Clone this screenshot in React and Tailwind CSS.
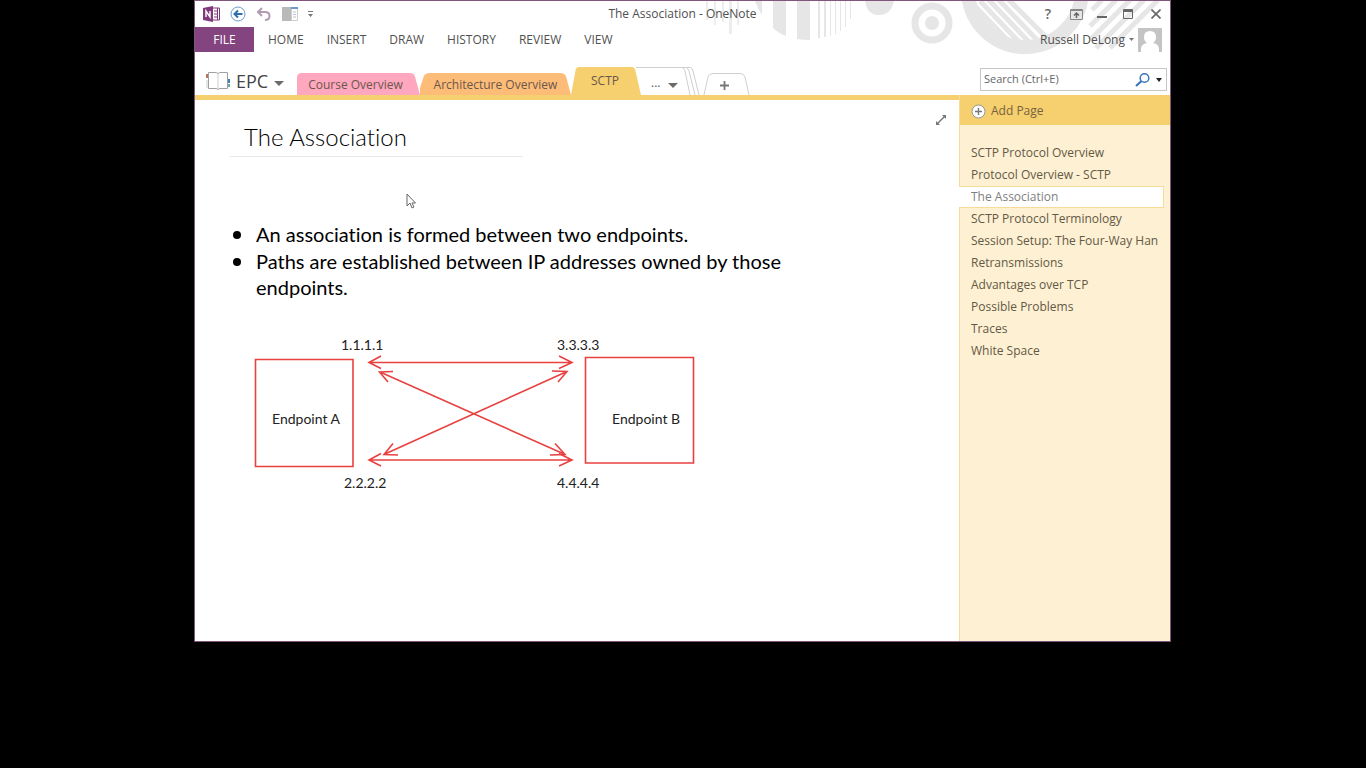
const menus = ["HOME", "INSERT", "DRAW", "HISTORY", "REVIEW", "VIEW"];

const pages = [
  "SCTP Protocol Overview",
  "Protocol Overview - SCTP",
  "The Association",
  "SCTP Protocol Terminology",
  "Session Setup: The Four-Way Han",
  "Retransmissions",
  "Advantages over TCP",
  "Possible Problems",
  "Traces",
  "White Space",
];

function HeaderArt() {
  return (
    <svg className="pointer-events-none absolute top-0 right-0" width="470" height="54" viewBox="700 0 470 54" aria-hidden="true">
      <g fill="#e6e6e6">
        <path d="M706 0h2v19h-2zM714 0h2v24h-2zM722 0h2v21h-2zM729 0h3v33h-3zM737 0h2v24h-2z" opacity=".7" />
        <path d="M755 0h7v14q-4-6-7-14zM773 0h13v35q-8-3-13-8zM797 0h13v39q-7 0-13-1z" />
        <path d="M818 0h2v37h-2zM824 0h2v36h-2zM830 0h1v35h-1zM835 0h1v33h-1zM840 0h1v30h-1zM845 0h1v26h-1zM850 0h1v18h-1z" />
        <path d="M865 0h29q-3 14-15 14T865 0z" />
        <circle cx="932" cy="22" r="7" />
      </g>
      <g fill="none" stroke="#e6e6e6">
        <circle cx="932" cy="22" r="17" strokeWidth="7" />
        <circle cx="1025" cy="-11" r="57" strokeWidth="14" />
        <path d="M972 2L1014 46M980 0L1022 44M988 -2L1031 43M996 -4L1040 42M1005 -5L1048 38" strokeWidth="5" />
        <path d="M1092 9L1102 -1M1090 25L1116 -1M1090 39L1130 -1M1096 47L1144 -1M1110 47L1158 -1" strokeWidth="5" />
      </g>
    </svg>
  );
}

function OneNoteLogo() {
  return (
    <svg width="17" height="16" viewBox="0 0 17 16" aria-hidden="true">
      <path d="M9 2h7.500v12H9z" fill="#fff" stroke="#80397b" />
      <path d="M11 5h3M11 8h3M11 11h3M14.500 2v12" stroke="#80397b" />
      <path d="M0 2L10 0v16L0 14z" fill="#80397b" />
      <path d="M3 11V5l4 6V5" fill="none" stroke="#fff" strokeWidth="1.400" />
    </svg>
  );
}

function BackIcon() {
  return (
    <svg width="16" height="16" viewBox="0 0 16 16" fill="none" aria-hidden="true">
      <circle cx="8" cy="8" r="7" stroke="#6f9cc8" />
      <path d="M12.500 8H5M8 4.500L4.500 8L8 11.500" stroke="#2f6fb0" strokeWidth="2" />
    </svg>
  );
}

function UndoIcon() {
  return (
    <svg width="16" height="14" viewBox="0 0 16 14" fill="none" stroke="#b39ab3" strokeWidth="2" aria-hidden="true">
      <path d="M6 1L2 5l4 4M2 5h7q4.500 0 4.500 4T9 13" />
    </svg>
  );
}

function DockIcon() {
  return (
    <svg width="16" height="14" viewBox="0 0 16 14" aria-hidden="true">
      <path d="M0 0h9v14H0z" fill="#b9b9b9" />
      <path d="M9.500.500h6v13h-6z" fill="#fff" stroke="#ccc" />
      <path d="M9 0h7v2H9z" fill="#6f9ac9" />
      <path d="M11 5h3M11 7.500h3M11 10h3" stroke="#b3c4d8" />
    </svg>
  );
}

function NotebookIcon() {
  return (
    <svg width="24" height="20" viewBox="0 0 24 20" fill="none" aria-hidden="true">
      <path d="M12 2.500Q11 1.500 9 1.500H2.500v16H10q1 0 2 1q1-1 2-1h7.500v-16H15Q13 1.500 12 2.500z" stroke="#a0a0a0" />
      <path d="M12 3v15" stroke="#cfcfcf" />
      <path d="M1 3v4" stroke="#b5735f" strokeWidth="2" />
      <path d="M1 9v8" stroke="#ccc" />
      <path d="M23 8v4" stroke="#3f7fb8" strokeWidth="2" />
      <path d="M23 13v3" stroke="#6fa9a0" strokeWidth="2" />
    </svg>
  );
}

function Caret({ className }) {
  return (
    <svg className={className} width="10" height="5" viewBox="0 0 10 5" aria-hidden="true">
      <path d="M0 0h10L5 5z" fill="#6a6a6a" />
    </svg>
  );
}

function WindowControls() {
  return (
    <div className="flex items-center text-[#666]">
      <button aria-label="Help" className="w-6 text-sm font-semibold leading-4">?</button>
      <button aria-label="Ribbon display options" className="flex w-8 justify-center">
        <svg width="13" height="11" viewBox="0 0 13 11" fill="none" stroke="currentColor" aria-hidden="true">
          <path d="M.500.500h12v10H.500zM0 1.500h13" stroke="#888" />
          <path d="M6.500 9V4.500M4 6.500L6.500 4L9 6.500" strokeWidth="1.500" />
        </svg>
      </button>
      <button aria-label="Minimize" className="flex w-5 justify-center">
        <svg width="10" height="11" viewBox="0 0 10 11" aria-hidden="true"><path d="M0 7h10v2H0z" fill="currentColor" /></svg>
      </button>
      <button aria-label="Maximize" className="flex w-8 justify-center">
        <svg width="10" height="10" viewBox="0 0 10 10" fill="none" stroke="currentColor" aria-hidden="true"><path d="M.500.500h9v9h-9zM0 1.500h10M0 2.500h10" /></svg>
      </button>
      <button aria-label="Close" className="flex w-6 justify-center">
        <svg width="10" height="10" viewBox="0 0 10 10" fill="none" stroke="currentColor" strokeWidth="1.600" aria-hidden="true"><path d="M.500.500l9 9M9.500.500l-9 9" /></svg>
      </button>
    </div>
  );
}

function SectionTab({ label, fill, shape, className }) {
  return (
    <button className={"relative flex items-center justify-center " + className}>
      <svg className="absolute inset-0 h-full w-full" viewBox="0 0 124 24" preserveAspectRatio="none" aria-hidden="true">
        <path d={shape} fill={fill} />
      </svg>
      <span className="relative">{label}</span>
    </button>
  );
}

function SectionTabs() {
  return (
    <nav aria-label="Sections" className="flex items-end text-xs text-[#6b564a]">
      <SectionTab label="Course Overview" fill="#ffa7bf" className="h-[22px] w-[123px] pt-0.5 pr-1.5" shape="M0 24V5Q0 0 5 0H114Q118 0 119 4L124 24z" />
      <SectionTab label="Architecture Overview" fill="#fdbd79" className="h-[22px] w-[151px] pt-0.5" shape="M0 24V16L3 4Q4 0 8 0H115Q119 0 120 4L124 24z" />
      <SectionTab label="SCTP" fill="#f6cf6e" className="h-7 w-[70px] pr-0.5" shape="M0 24L8 3Q9 0 14 0H108Q113 0 114 3L124 24z" />
      <button aria-label="More sections" className="relative flex h-7 w-[61px] items-center gap-2 pt-2 pl-2.5 text-[#555]">
        <svg className="absolute top-0 right-0" width="66" height="28" viewBox="0 0 66 28" fill="none" stroke="#cfcfcf" aria-hidden="true">
          <path d="M0 .500H54Q56 .500 57 4L63 28M50 .500Q52 1 53 4L59 28M46 .500Q48 1 49 4L54 28" />
        </svg>
        <span className="-mt-1">...</span>
        <Caret />
      </button>
      <button aria-label="Create a new section" className="relative flex h-[22px] w-12 items-center justify-center pt-0.5 pr-1 text-[#777]">
        <svg className="absolute inset-0" width="48" height="22" viewBox="0 0 48 22" fill="none" stroke="#cfcfcf" aria-hidden="true">
          <path d="M2 22L6 4Q7 .500 11 .500H38Q42 .500 43 4L47 22" />
        </svg>
        <svg width="9" height="9" viewBox="0 0 9 9" stroke="currentColor" strokeWidth="1.800" aria-hidden="true"><path d="M4.500 0v9M0 4.500h9" /></svg>
      </button>
    </nav>
  );
}

function Diagram() {
  return (
    <svg className="mt-[30px] ml-5 block w-[460px] max-w-full" viewBox="250 330 460 170" role="img" aria-label="Paths between Endpoint A and Endpoint B">
      <g fill="none" stroke="#e8413f" strokeWidth="1.600">
        <path d="M255.500 359.500h97.500v107h-97.500zM585.500 357.500h108v105.500h-108z" />
        <path d="M370 362.500H571M381 356l-12 6.500l12 6M559 356l13 6.500l-13 6" />
        <path d="M370 460H571M381 453.500l-12 6.500l12 6M559 453.500l13 6.500l-13 6" />
        <path d="M380 372L564 454M393 371.500L379.500 372L388 382M555 443.500L565 454.500L550 455" />
        <path d="M385 454L567 371.500M393 443.500L384 454.500L398 455M552 371L567 371.500L558 382" />
      </g>
      <g fill="#222" className="font-[Lato,'Open_Sans',sans-serif] text-[14px]">
        <text x="341" y="350">1.1.1.1</text>
        <text x="557" y="350">3.3.3.3</text>
        <text x="344" y="488">2.2.2.2</text>
        <text x="557" y="488">4.4.4.4</text>
        <text x="272" y="424">Endpoint A</text>
        <text x="612" y="424">Endpoint B</text>
      </g>
    </svg>
  );
}

function Bullet({ children }) {
  return (
    <li className="flex gap-[15px]">
      <span aria-hidden="true" className="mt-2.5 ml-[3px] size-2 shrink-0 rounded-full bg-black" />
      <span>{children}</span>
    </li>
  );
}

export default function App() {
  return (
    <div className="flex min-h-screen flex-col bg-black pr-[195px] pb-[126px] pl-[194px] font-['Open_Sans','Noto_Sans',sans-serif]">
      <div className="relative flex flex-1 flex-col border border-[#80567c] bg-white text-xs text-[#505050]">
        <HeaderArt />
        <header className="relative">
          <div className="relative flex h-[26px] items-center justify-between pr-0.5 pl-2">
            <div className="flex items-center gap-2.5">
              <OneNoteLogo />
              <button aria-label="Back"><BackIcon /></button>
              <button aria-label="Undo"><UndoIcon /></button>
              <button aria-label="Dock to desktop"><DockIcon /></button>
              <button aria-label="Customize quick access toolbar" className="text-[#777]">
                <svg width="5" height="6" viewBox="0 0 5 6" aria-hidden="true"><path d="M0 0h5v1H0zM0 3h5L2.500 6z" fill="currentColor" /></svg>
              </button>
            </div>
            <h1 className="pointer-events-none absolute inset-x-0 text-center">The Association - OneNote</h1>
            <WindowControls />
          </div>
          <div className="flex h-[25px] items-center justify-between pr-2">
            <nav aria-label="Ribbon" className="flex h-full items-center">
              <button className="h-full w-[59px] bg-[#834480] text-white">FILE</button>
              <div className="flex gap-[23px] pl-3.5">
                {menus.map((m) => <button key={m}>{m}</button>)}
              </div>
            </nav>
            <button className="flex items-center gap-1">
              <span>Russell DeLong</span>
              <svg width="5" height="3" viewBox="0 0 5 3" aria-hidden="true"><path d="M0 0h5L2.500 3z" fill="#777" /></svg>
              <svg width="24" height="24" viewBox="0 0 24 24" aria-hidden="true">
                <path d="M0 0h24v24H0z" fill="#c4c4c4" />
                <path d="M3 24v-3q0-5 6-6q-3-2-3-6q0-6 6-6t6 6q0 4-3 6q6 1 6 6v3z" fill="#fff" />
              </svg>
            </button>
          </div>
          <div className="flex h-[43px] items-end justify-between">
            <div className="flex items-end">
              <button className="flex w-[102px] items-center pb-1 pl-[11px] text-lg leading-5 text-[#444]">
                <NotebookIcon />
                <span className="pl-1.5">EPC</span>
                <Caret className="mt-1 ml-1.5" />
              </button>
              <SectionTabs />
            </div>
            <div className="mr-[3px] mb-1 flex h-[23px] w-[187px] items-center border border-[#c6c6c6] bg-white pr-1">
              <input aria-label="Search" placeholder="Search (Ctrl+E)" className="min-w-0 flex-1 pl-[3px] text-[11px] placeholder:text-[#666]" />
              <button aria-label="Search notes">
                <svg width="15" height="14" viewBox="0 0 15 14" fill="none" stroke="#3b74b8" aria-hidden="true"><circle cx="9.500" cy="5" r="4.300" strokeWidth="1.500" /><path d="M6.500 8L1 13" strokeWidth="2.200" /></svg>
              </button>
              <button aria-label="Search scope" className="ml-1.5">
                <svg width="6" height="4" viewBox="0 0 6 4" aria-hidden="true"><path d="M0 0h6L3 4z" fill="#222" /></svg>
              </button>
            </div>
          </div>
        </header>
        <div className="h-[5px] bg-[#f6cf6e]" />
        <div className="flex flex-1">
          <main className="relative flex-1 pl-[35px] text-black [font-variant-ligatures:none]">
            <button aria-label="Full page view" className="absolute top-3.5 right-3">
              <svg width="12" height="12" viewBox="0 0 12 12" fill="#777" stroke="#777" aria-hidden="true"><path d="M2 10L10 2" strokeWidth="1.500" /><path d="M7 1h4v4zM1 7v4h4z" stroke="none" /></svg>
            </button>
            <h2 className="w-[293px] border-b border-[#e9e9e9] pt-[21px] pb-[3px] pl-3.5 font-[Lato,sans-serif] text-2xl leading-8 font-light">The Association</h2>
            <ul className="mt-16 flex w-[570px] flex-col gap-px font-[Lato,sans-serif] text-xl leading-[26px]">
              <Bullet>An association is formed between two endpoints.</Bullet>
              <Bullet>Paths are established between IP addresses owned by those endpoints.</Bullet>
            </ul>
            <Diagram />
            <svg className="absolute top-[93px] left-[211px]" width="10" height="16" viewBox="0 0 10 16" aria-hidden="true">
              <path d="M1 1v12l3-3l2 5l2-1l-2-4h3.500z" fill="#fff" stroke="#666" />
            </svg>
          </main>
          <aside className="-mt-[5px] flex w-[211px] flex-col border-l border-[#f6dc96] bg-[#fdf0d3]">
            <button className="flex h-[30px] items-center gap-[5px] bg-[#f6cf6e] pt-0.5 pl-[11px] text-[#75633f]">
              <svg width="15" height="15" viewBox="0 0 15 15" aria-hidden="true"><circle cx="7.500" cy="7.500" r="6.500" fill="#fff" stroke="#999" /><path d="M7.500 4v7M4 7.500h7" stroke="#777" strokeWidth="1.400" /></svg>
              <span>Add Page</span>
            </button>
            <ul className="pt-[17px]">
              {pages.map((p) => (
                <li key={p}>
                  <a href="#" className={p === "The Association" ? "-ml-px mr-1.5 block h-[22px] border border-l-0 border-[#f6dc96] bg-white pl-3 leading-5 text-[#808080]" : "block h-[22px] pl-[11px] leading-[22px] whitespace-nowrap text-[#635945]"}>{p}</a>
                </li>
              ))}
            </ul>
          </aside>
        </div>
      </div>
    </div>
  );
}
